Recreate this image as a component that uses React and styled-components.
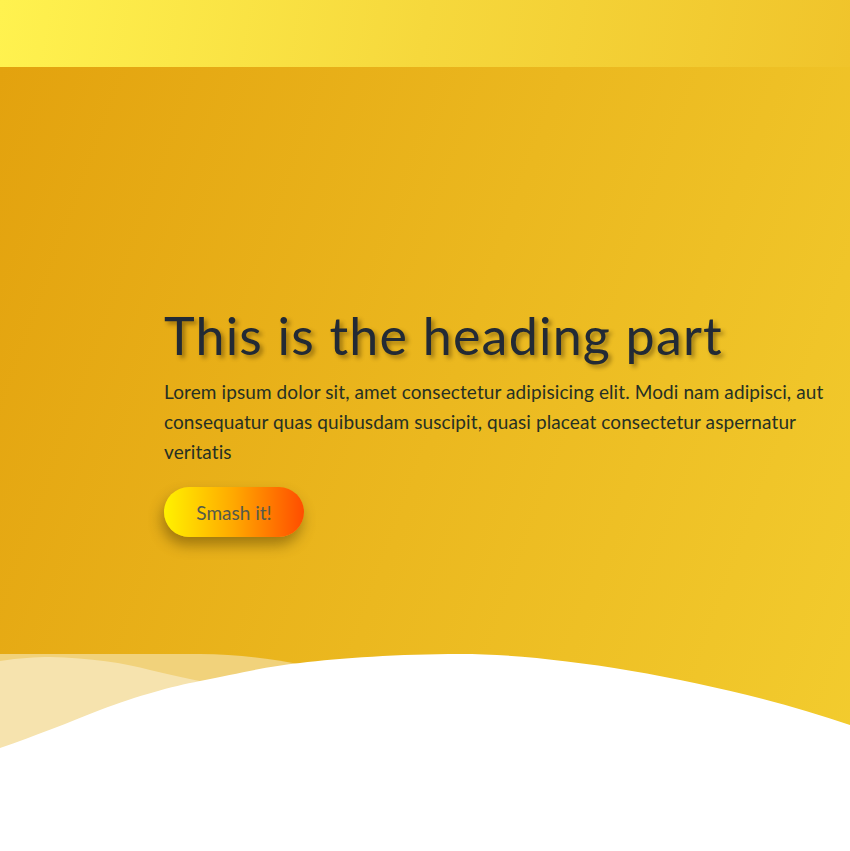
import styled, { createGlobalStyle } from 'styled-components';

const GlobalStyle = createGlobalStyle`
  * {
    box-sizing: border-box;
  }
  body {
    margin: 0;
    background: #fff;
    font-family: Lato, 'Open Sans', sans-serif;
  }
`;

function Waves() {
  return (
    <WaveSvg viewBox='0 0 850 200' preserveAspectRatio='none'>
      <path
        fill='#f1d27b'
        d='M0,3 L200,3 C235,3 265,7 305,14 L310,200 L0,200 Z'
      />
      <path
        fill='#f6e3ae'
        d='M0,10 C20,7 35,6 50,6 C90,7 125,12 150,19 C170,24 190,28 215,33 L215,200 L0,200 Z'
      />
      <path
        fill='#ffffff'
        d='M0,97 C35,85 70,71 100,59 C140,44 170,36 200,30 C240,22 270,15 300,12 C340,7 400,3 460,3 C560,3 720,30 850,74 L850,200 L0,200 Z'
      />
    </WaveSvg>
  );
}

function App() {
  return (
    <>
      <GlobalStyle />
      <Header />
      <Hero>
        <Content>
          <Heading>This is the heading part</Heading>
          <Text>
            Lorem ipsum dolor sit, amet consectetur adipisicing elit. Modi nam
            adipisci, aut consequatur quas quibusdam suscipit, quasi placeat
            consectetur aspernatur veritatis
          </Text>
          <BtnSmash>Smash it!</BtnSmash>
        </Content>
        <Waves />
      </Hero>
    </>
  );
}

export default App;

const Header = styled.header`
  height: 67px;
  background: linear-gradient(100deg, #fff24f 0%, #f6d83c 50%, #f0c42b 100%);
`;

const Hero = styled.section`
  height: 784px;
  display: flex;
  flex-direction: column;
  background: linear-gradient(110deg, #e3a20e 0%, #ebb81f 50%, #f3cd2f 100%);
  overflow: hidden;
`;

const Content = styled.div`
  padding: 237px 0 0 164px;
  max-width: 840px;
  display: flex;
  flex-direction: column;
  align-items: flex-start;
`;

const Heading = styled.h1`
  margin: 0;
  font-size: 52px;
  line-height: 1.2;
  font-weight: 400;
  letter-spacing: 1.2px;
  color: #222a35;
  text-shadow: 3px 3px 4px rgba(60, 40, 0, 0.45);
`;

const Text = styled.p`
  margin: 11px 0 0;
  font-size: 19px;
  line-height: 30px;
  letter-spacing: 0.1px;
  color: #263024;
`;

const BtnSmash = styled.button`
  margin-top: 20px;
  width: 140px;
  height: 50px;
  border: none;
  border-radius: 25px;
  background: linear-gradient(90deg, #fff200 0%, #ffa800 50%, #ff4d00 100%);
  box-shadow: -2px 8px 14px rgba(70, 50, 0, 0.45);
  font-family: Lato, 'Open Sans', sans-serif;
  font-size: 19px;
  color: #555a4a;
  cursor: pointer;
`;

const WaveSvg = styled.svg`
  display: block;
  margin-top: auto;
  width: 100%;
  height: 200px;
  flex-shrink: 0;
`;
